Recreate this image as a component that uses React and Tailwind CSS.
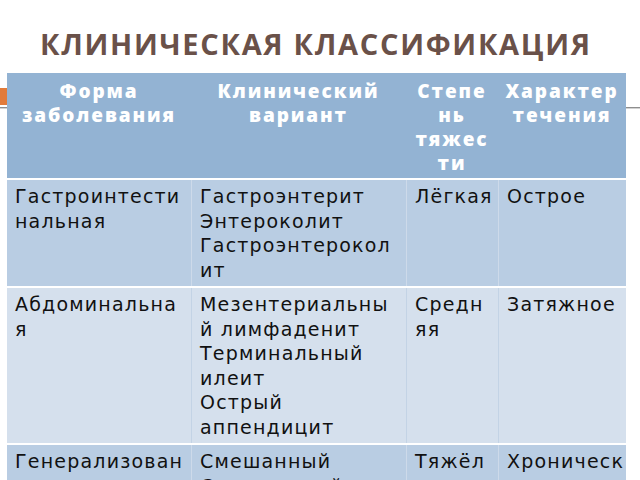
const rows = [
  {
    bg: 'bg-[#b9cde3]',
    line: 'border-[#cddaea]',
    cells: [
      ['Гастроинтести', 'нальная'],
      ['Гастроэнтерит', 'Энтероколит', 'Гастроэнтерокол', 'ит'],
      ['Лёгкая'],
      ['Острое'],
    ],
  },
  {
    bg: 'bg-[#d5e0ed]',
    line: 'border-[#c3d3e5]',
    cells: [
      ['Абдоминальна', 'я'],
      ['Мезентериальны', 'й лимфаденит', 'Терминальный', 'илеит', 'Острый', 'аппендицит'],
      ['Средн', 'яя'],
      ['Затяжное'],
    ],
  },
  {
    bg: 'bg-[#b9cde3]',
    line: 'border-[#cddaea]',
    cells: [
      ['Генерализован', 'ная'],
      ['Смешанный', 'Септический'],
      ['Тяжёл', 'ая'],
      ['Хроническ', 'ое'],
    ],
  },
]

const head = [
  ['Форма', 'заболевания'],
  ['Клинический', 'вариант'],
  ['Степе', 'нь', 'тяжес', 'ти'],
  ['Характер', 'течения'],
]

const cols = 'grid grid-cols-[184px_215px_92px_128px]'

export default function App() {
  return (
    <div className="w-[640px] h-[480px] overflow-hidden bg-white">
      {/* Title */}
      <div className="h-[73px] pt-[26px] pl-[40px]">
        <h1 className="font-['Open_Sans',sans-serif] font-bold text-[29px] leading-[36px] tracking-[1.7px] text-[#6a5149] whitespace-nowrap">
          КЛИНИЧЕСКАЯ КЛАССИФИКАЦИЯ
        </h1>
      </div>

      <div className="flex">
        {/* left slide decoration */}
        <div className="w-[7px] pt-[15px]">
          <div className="h-[17px] bg-[#e27b3a]" />
          <div className="h-[2px]" />
          <div className="h-[1px] bg-[#8e8e8e]" />
          <div className="h-[1px] bg-[#d2d2d2]" />
        </div>

        {/* table */}
        <div className="w-[619px]">
          <div className={`${cols} h-[105px] bg-[#93b3d3]`}>
            {head.map((lines, i) => (
              <div
                key={i}
                className="pt-[6px] text-center font-['Open_Sans',sans-serif] font-extrabold text-[19px] leading-[24px] tracking-[1.9px] text-white whitespace-nowrap"
              >
                {lines.map((l, j) => (
                  <div key={j}>{l}</div>
                ))}
              </div>
            ))}
          </div>

          {rows.map((row, r) => (
            <div key={r} className={`${cols} ${row.bg} border-t-2 border-white`}>
              {row.cells.map((lines, i) => (
                <div
                  key={i}
                  className={`pt-[4px] pb-[4px] pl-[8px] font-['DejaVu_Sans',sans-serif] text-[19px] leading-[24.5px] tracking-[1.2px] text-[#111111] whitespace-nowrap ${
                    i > 0 ? `border-l ${row.line}` : ''
                  }`}
                >
                  {lines.map((l, j) => (
                    <div key={j}>{l}</div>
                  ))}
                </div>
              ))}
            </div>
          ))}
        </div>

        {/* right slide decoration */}
        <div className="flex-1 pt-[34px]">
          <div className="h-[1px] bg-[#8e8e8e]" />
          <div className="h-[1px] bg-[#d2d2d2]" />
        </div>
      </div>
    </div>
  )
}
